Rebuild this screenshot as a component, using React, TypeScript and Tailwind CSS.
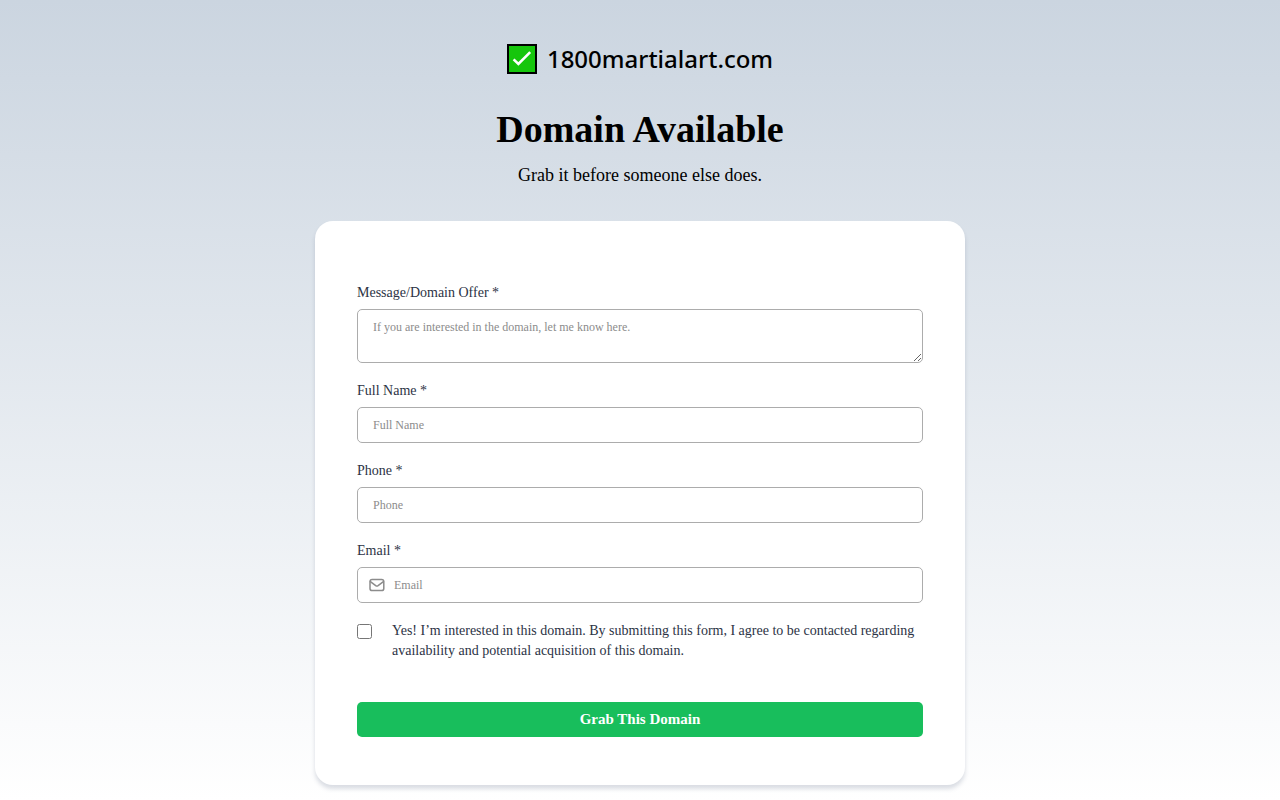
import { useId } from "react";
import type { InputHTMLAttributes, ReactNode } from "react";

const fieldBox =
  "block w-full rounded-[5px] border border-[#acacac] bg-white text-[12px] leading-[18px] text-[#2c3345] placeholder:text-[#8c8c8c] placeholder:opacity-100";

function CheckMark() {
  return (
    <svg viewBox="0 0 30 30" className="h-[30px] w-[30px] shrink-0" aria-hidden="true">
      <rect x="1" y="1" width="28" height="28" fill="#16c60c" stroke="#000" strokeWidth="2" />
      <path d="M6.6 15.4 L11.4 20 L23.2 8.2" fill="none" stroke="#fff" strokeWidth="2.6" />
    </svg>
  );
}

function MailIcon() {
  return (
    <svg
      viewBox="0 0 16 14"
      className="h-[14px] w-4"
      fill="none"
      stroke="#8c8c8c"
      strokeWidth="1.5"
      strokeLinecap="round"
      strokeLinejoin="round"
      aria-hidden="true"
    >
      <rect x="1" y="1.4" width="13.8" height="11.2" rx="2.2" />
      <path d="M1.4 3.6 L6.7 7.6 Q7.9 8.4 9.1 7.6 L14.4 3.6" />
    </svg>
  );
}

type TextFieldProps = InputHTMLAttributes<HTMLInputElement> & { label: string; icon?: ReactNode };

function TextField({ label, icon, ...rest }: TextFieldProps) {
  const id = useId();
  return (
    <div>
      <label htmlFor={id} className="mb-[6px] block text-[14px] leading-5">
        {label} *
      </label>
      <div className="relative">
        {icon && <span className="absolute inset-y-0 left-3 flex items-center">{icon}</span>}
        <input id={id} required className={`${fieldBox} h-9 pr-[15px] ${icon ? "pl-9" : "pl-[15px]"}`} {...rest} />
      </div>
    </div>
  );
}

export default function App() {
  return (
    <main className="min-h-screen bg-linear-to-b from-[#cbd5e0] to-white px-4 pt-10 pb-[15px] font-['Liberation_Serif',serif] text-black">
      <header className="flex flex-col items-center text-center">
        <div className="flex h-[38px] items-center gap-[10px] font-['Noto_Sans',sans-serif] text-[24px] font-medium">
          <CheckMark />
          <span>1800martialart.com</span>
        </div>
        <h1 className="mt-7 text-[38px] leading-[46px] font-bold">Domain Available</h1>
        <p className="mt-[10px] text-[18px] leading-[27px]">Grab it before someone else does.</p>
      </header>

      <form
        className="mx-auto mt-8 flex max-w-[650px] flex-col gap-[18px] rounded-[18px] bg-white px-[42px] pt-[62px] pb-12 text-[#2c3345] shadow-[0_4px_4px_0_rgba(87,100,126,0.21)]"
        onSubmit={(event) => event.preventDefault()}
      >
        <div>
          <label htmlFor="message" className="mb-[6px] block text-[14px] leading-5">
            Message/Domain Offer *
          </label>
          <textarea
            id="message"
            required
            placeholder="If you are interested in the domain, let me know here."
            className={`${fieldBox} h-[54px] resize px-[15px] py-2`}
          />
        </div>
        <TextField label="Full Name" type="text" placeholder="Full Name" />
        <TextField label="Phone" type="tel" placeholder="Phone" />
        <TextField label="Email" type="email" placeholder="Email" icon={<MailIcon />} />

        <div className="flex items-start gap-5">
          <input id="consent" type="checkbox" className="mt-[3px] h-[15px] w-[15px] shrink-0" />
          <label htmlFor="consent" className="text-[14px] leading-5">
            Yes! I’m interested in this domain. By submitting this form, I agree to be contacted regarding availability
            and potential acquisition of this domain.
          </label>
        </div>

        <button
          type="submit"
          className="mt-[23px] h-[35px] cursor-pointer rounded-[5px] bg-[#18be5c] text-[15px] font-bold text-white"
        >
          Grab This Domain
        </button>
      </form>
    </main>
  );
}
